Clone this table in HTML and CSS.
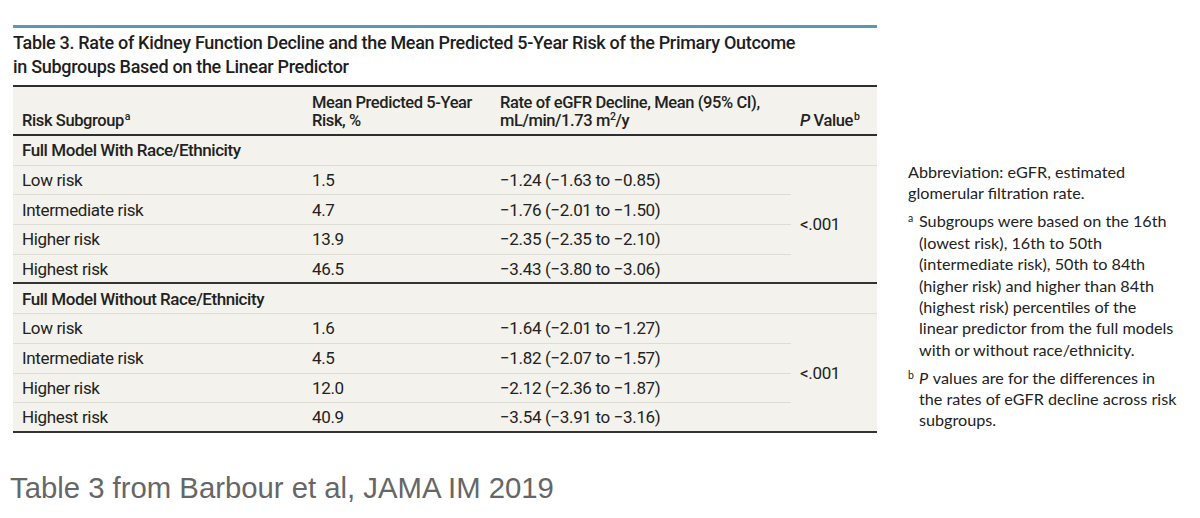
FILE: index.html
```html
<!DOCTYPE html>
<html lang="en">
<head>
<meta charset="utf-8">
<title>Table 3</title>
<link rel="stylesheet" href="styles.css">
</head>
<body>
<div class="page">
  <div class="layout">
    <figure class="fig">
      <div class="fig-rule"></div>
      <h1 class="fig-title">Table 3. Rate of Kidney Function Decline and the Mean Predicted 5-Year Risk of the Primary Outcome<br>in Subgroups Based on the Linear Predictor</h1>
      <table class="tbl">
        <colgroup>
          <col class="c1"><col class="c2"><col class="c3"><col class="c4">
        </colgroup>
        <thead>
          <tr>
            <th>Risk Subgroup<sup>a</sup></th>
            <th>Mean Predicted 5-Year<br>Risk, %</th>
            <th>Rate of eGFR Decline, Mean (95% CI),<br>mL/min/1.73 m<sup class="sq">2</sup>/y</th>
            <th><i>P</i> Value<sup>b</sup></th>
          </tr>
        </thead>
        <tbody>
          <tr class="sec"><td colspan="4">Full Model With Race/Ethnicity</td></tr>
          <tr><td>Low risk</td><td>1.5</td><td>−1.24 (−1.63 to −0.85)</td><td class="pv" rowspan="4">&lt;.001</td></tr>
          <tr><td>Intermediate risk</td><td>4.7</td><td>−1.76 (−2.01 to −1.50)</td></tr>
          <tr><td>Higher risk</td><td>13.9</td><td>−2.35 (−2.35 to −2.10)</td></tr>
          <tr class="last"><td>Highest risk</td><td>46.5</td><td>−3.43 (−3.80 to −3.06)</td></tr>
        </tbody>
        <tbody>
          <tr class="sec"><td colspan="4">Full Model Without Race/Ethnicity</td></tr>
          <tr><td>Low risk</td><td>1.6</td><td>−1.64 (−2.01 to −1.27)</td><td class="pv" rowspan="4">&lt;.001</td></tr>
          <tr><td>Intermediate risk</td><td>4.5</td><td>−1.82 (−2.07 to −1.57)</td></tr>
          <tr><td>Higher risk</td><td>12.0</td><td>−2.12 (−2.36 to −1.87)</td></tr>
          <tr class="last"><td>Highest risk</td><td>40.9</td><td>−3.54 (−3.91 to −3.16)</td></tr>
        </tbody>
      </table>
    </figure>
    <aside class="notes">
      <p class="note">Abbreviation: eGFR, estimated<br>glomerular filtration rate.</p>
      <p class="note hang"><sup>a</sup>Subgroups were based on the 16th<br>(lowest risk), 16th to 50th<br>(intermediate risk), 50th to 84th<br>(higher risk) and higher than 84th<br>(highest risk) percentiles of the<br>linear predictor from the full models<br>with or without race/ethnicity.</p>
      <p class="note hang"><sup>b</sup><i class="pi">P</i> values are for the differences in<br>the rates of eGFR decline across risk<br>subgroups.</p>
    </aside>
  </div>
  <p class="caption">Table 3 from Barbour et al, JAMA IM 2019</p>
</div>
</body>
</html>
```

FILE: styles.css
```css
* { box-sizing: border-box; }

body {
  margin: 0;
  background: #ffffff;
  color: #222222;
  font-family: Roboto, "Liberation Sans", sans-serif;
}

.page {
  padding: 25px 0 0 13px;
}

.layout {
  display: flex;
  align-items: flex-start;
  gap: 31px;
}

.fig {
  margin: 0;
  width: 864px;
  flex: none;
}

.fig-rule {
  height: 3px;
  background: #5b98b3;
}

.fig-title {
  margin: 3px 0 6px;
  font-size: 18px;
  line-height: 24px;
  font-weight: 500;
  color: #1e1e1e;
  letter-spacing: -0.3px;
}

.tbl {
  width: 864px;
  table-layout: fixed;
  border-collapse: separate;
  border-spacing: 0;
  background: #f3f2ec;
  font-size: 17px;
  letter-spacing: -0.35px;
}

.c1 { width: 290px; }
.c2 { width: 188px; }
.c3 { width: 300px; }
.c4 { width: 86px; }

.tbl th {
  height: 51px;
  padding: 0 9px 4px;
  text-align: left;
  vertical-align: bottom;
  font-size: 16.5px;
  font-weight: 500;
  line-height: 18px;
  letter-spacing: -0.4px;
  border-top: 2px solid #2e2e2e;
  border-bottom: 2px solid #2e2e2e;
}

.tbl sup {
  font-size: 10.5px;
  line-height: 0;
  vertical-align: 6px;
  margin-left: 1px;
}

.tbl sup.sq {
  margin-left: 0;
}

.tbl td {
  height: 29.7px;
  padding: 0 9px;
  vertical-align: middle;
  border-bottom: 1px solid #dddcd5;
}

.tbl .sec td {
  font-weight: 500;
  letter-spacing: -0.45px;
}

.tbl .last td,
.tbl td.pv {
  border-bottom: 2px solid #333333;
}

.notes {
  width: 290px;
  padding-top: 136px;
  font-family: Lato, "Open Sans", sans-serif;
  font-size: 16.2px;
  line-height: 21.4px;
  color: #222222;
  white-space: nowrap;
}

.note {
  margin: 0 0 6.5px;
}

.note.hang {
  padding-left: 11px;
  text-indent: -11px;
}

.note sup {
  display: inline-block;
  width: 11px;
  text-indent: 0;
  font-size: 10.5px;
  line-height: 0;
  vertical-align: 5px;
}

.pi {
  padding-right: 1px;
}

.caption {
  margin: 34px 0 0 -3px;
  font-family: "Liberation Sans", Arial, sans-serif;
  font-size: 29.3px;
  line-height: 34px;
  color: #666666;
}
```
